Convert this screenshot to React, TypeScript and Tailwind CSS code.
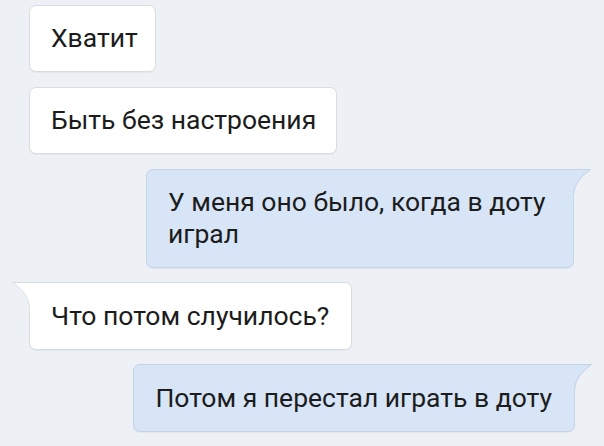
import React from "react";

const font = { fontFamily: "Roboto, 'Noto Sans', sans-serif" };

function TailRight({ fill, stroke }: { fill: string; stroke: string }) {
  return (
    <svg className="absolute left-full top-[-1px]" width="19" height="27" viewBox="0 0 19 27">
      <path d="M0 0 H18.5 Q1.5 12 1 27 H0 Z" fill={fill} />
      <path d="M0 0.5 H17.5 Q0.5 12 0.5 26" fill="none" stroke={stroke} strokeWidth="1" />
    </svg>
  );
}

function TailLeft({ fill, stroke }: { fill: string; stroke: string }) {
  return (
    <svg className="absolute right-full top-[-1px]" width="19" height="27" viewBox="0 0 19 27">
      <path d="M19 0 H0.5 Q17.5 12 18 27 H19 Z" fill={fill} />
      <path d="M19 0.5 H1.5 Q18.5 12 18.5 26" fill="none" stroke={stroke} strokeWidth="1" />
    </svg>
  );
}

export default function App() {
  return (
    <div
      className="w-[604px] h-[446px] bg-[#edf0f5] flex flex-col pt-[5px] text-[26.5px] leading-[32px] text-[#1c1c1c] overflow-hidden"
      style={font}
    >
      <div className="self-start ml-[29px] bg-white border border-[#d8dde4] rounded-[7px] pl-[21px] pr-[17px] pt-[16px] pb-[17px] shadow-[0_1px_0_rgba(0,0,0,0.04)]">
        Хватит
      </div>
      <div className="self-start ml-[29px] mt-[15px] bg-white border border-[#d8dde4] rounded-[7px] pl-[21px] pr-[20px] pt-[16px] pb-[17px] shadow-[0_1px_0_rgba(0,0,0,0.04)]">
        Быть без настроения
      </div>
      <div className="relative self-end mr-[30px] mt-[15px] w-[428px] bg-[#d7e5f7] border border-[#c3d3e8] rounded-[7px] rounded-tr-none pl-[21px] pr-[10px] pt-[16px] pb-[17px] shadow-[0_1px_0_rgba(0,0,0,0.04)]">
        У меня оно было, когда в доту играл
        <TailRight fill="#d7e5f7" stroke="#c3d3e8" />
      </div>
      <div className="relative self-start ml-[29px] mt-[14px] bg-white border border-[#d8dde4] rounded-[7px] rounded-tl-none pl-[21px] pr-[22px] pt-[17px] pb-[17px] shadow-[0_1px_0_rgba(0,0,0,0.04)]">
        Что потом случилось?
        <TailLeft fill="#ffffff" stroke="#d8dde4" />
      </div>
      <div className="relative self-end mr-[29px] mt-[14px] bg-[#d7e5f7] border border-[#c3d3e8] rounded-[7px] rounded-tr-none pl-[21px] pr-[22px] pt-[17px] pb-[17px] shadow-[0_1px_0_rgba(0,0,0,0.04)]">
        Потом я перестал играть в доту
        <TailRight fill="#d7e5f7" stroke="#c3d3e8" />
      </div>
    </div>
  );
}
